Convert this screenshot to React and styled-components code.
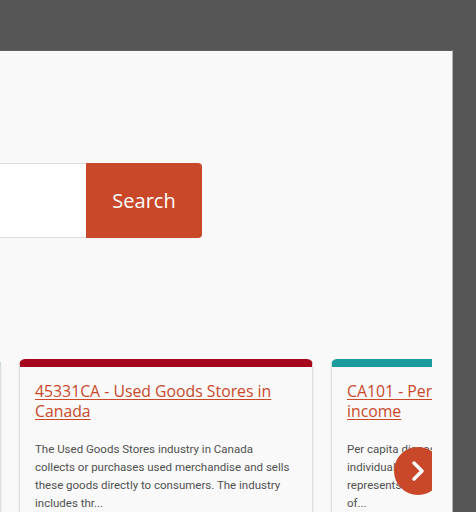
import React from 'react'
import styled, { createGlobalStyle } from 'styled-components'

const GlobalStyle = createGlobalStyle`
  html, body {
    margin: 0;
    padding: 0;
    background: #555555;
    overflow: hidden;
  }
  body {
    font-family: 'Open Sans', sans-serif;
  }
`

const Page = styled.div`
  width: 476px;
  height: 512px;
  padding-top: 50px;
  box-sizing: border-box;
`

const Panel = styled.section`
  width: 453px;
  height: 462px;
  background: #f9f9f9;
  border-top: 1px solid #5e5e5e;
  border-right: 1px solid #b4b4b4;
  box-sizing: border-box;
  overflow: hidden;
`

const SearchForm = styled.form`
  display: flex;
  margin-top: 112px;
  margin-left: -214px;
`

const SearchInput = styled.input`
  width: 300px;
  height: 75px;
  box-sizing: border-box;
  border: 1px solid #dcdcdc;
  border-right: none;
  background: #ffffff;
  outline: none;
`

const SearchButton = styled.button`
  width: 116px;
  height: 75px;
  border: none;
  border-radius: 0 4px 4px 0;
  background: #c9482a;
  color: #ffffff;
  font-family: 'Open Sans', sans-serif;
  font-size: 20px;
  cursor: pointer;
`

const Carousel = styled.div`
  position: relative;
  width: 432px;
  margin-top: 121px;
  overflow: hidden;
`

const Track = styled.div`
  display: flex;
  gap: 18px;
  transform: translateX(-293px);
`

const Card = styled.article`
  flex: 0 0 294px;
  height: 170px;
  box-sizing: border-box;
  background: #f9f9f9;
  border: 1px solid #dedede;
  border-top: 8px solid ${p => p.accent};
  border-radius: 6px 6px 0 0;
  padding: 14px 17px 14px 15px;
  box-shadow: 0 1px 3px rgba(0, 0, 0, 0.08);
`

const CardTitle = styled.a`
  display: block;
  font-family: 'Open Sans', sans-serif;
  font-size: 15.8px;
  line-height: 20px;
  color: #c9482a;
  text-decoration: underline;
  text-underline-offset: 2px;
  margin-bottom: 19px;
`

const CardText = styled.p`
  margin: 0;
  font-family: Roboto, sans-serif;
  font-size: 11.5px;
  line-height: 18px;
  color: #505050;
`

const NextButton = styled.button`
  position: absolute;
  left: 394px;
  top: 88px;
  width: 48px;
  height: 48px;
  border-radius: 50%;
  border: none;
  padding: 0;
  background: #c9482a;
  display: flex;
  align-items: center;
  justify-content: center;
`

const cards = [
  {
    accent: '#1b9aa0',
    title: 'CA102 - Household income',
    text: 'Household income measures the total income of all individuals living in a household, including wages and other sources of...',
  },
  {
    accent: '#a5071d',
    title: '45331CA - Used Goods Stores in Canada',
    text: 'The Used Goods Stores industry in Canada collects or purchases used merchandise and sells these goods directly to consumers. The industry includes thr...',
  },
  {
    accent: '#1b9aa0',
    title: 'CA101 - Per capita disposable income',
    text: "Per capita disposable income refers to each individual's income after taxes. This indicator represents the total disposable income per head of...",
  },
]

const App = () => (
  <Page>
    <GlobalStyle />
    <Panel>
      <SearchForm onSubmit={e => e.preventDefault()}>
        <SearchInput type="text" />
        <SearchButton type="submit">Search</SearchButton>
      </SearchForm>
      <Carousel>
        <Track>
          {cards.map(c => (
            <Card key={c.title} accent={c.accent}>
              <CardTitle href="#">{c.title}</CardTitle>
              <CardText>{c.text}</CardText>
            </Card>
          ))}
        </Track>
        <NextButton aria-label="Next">
          <svg width="20" height="24" viewBox="0 0 20 24" fill="none">
            <path d="M6 4l8 8-8 8" stroke="#fff" strokeWidth="3.5" strokeLinecap="round" strokeLinejoin="round" />
          </svg>
        </NextButton>
      </Carousel>
    </Panel>
  </Page>
)

export default App
